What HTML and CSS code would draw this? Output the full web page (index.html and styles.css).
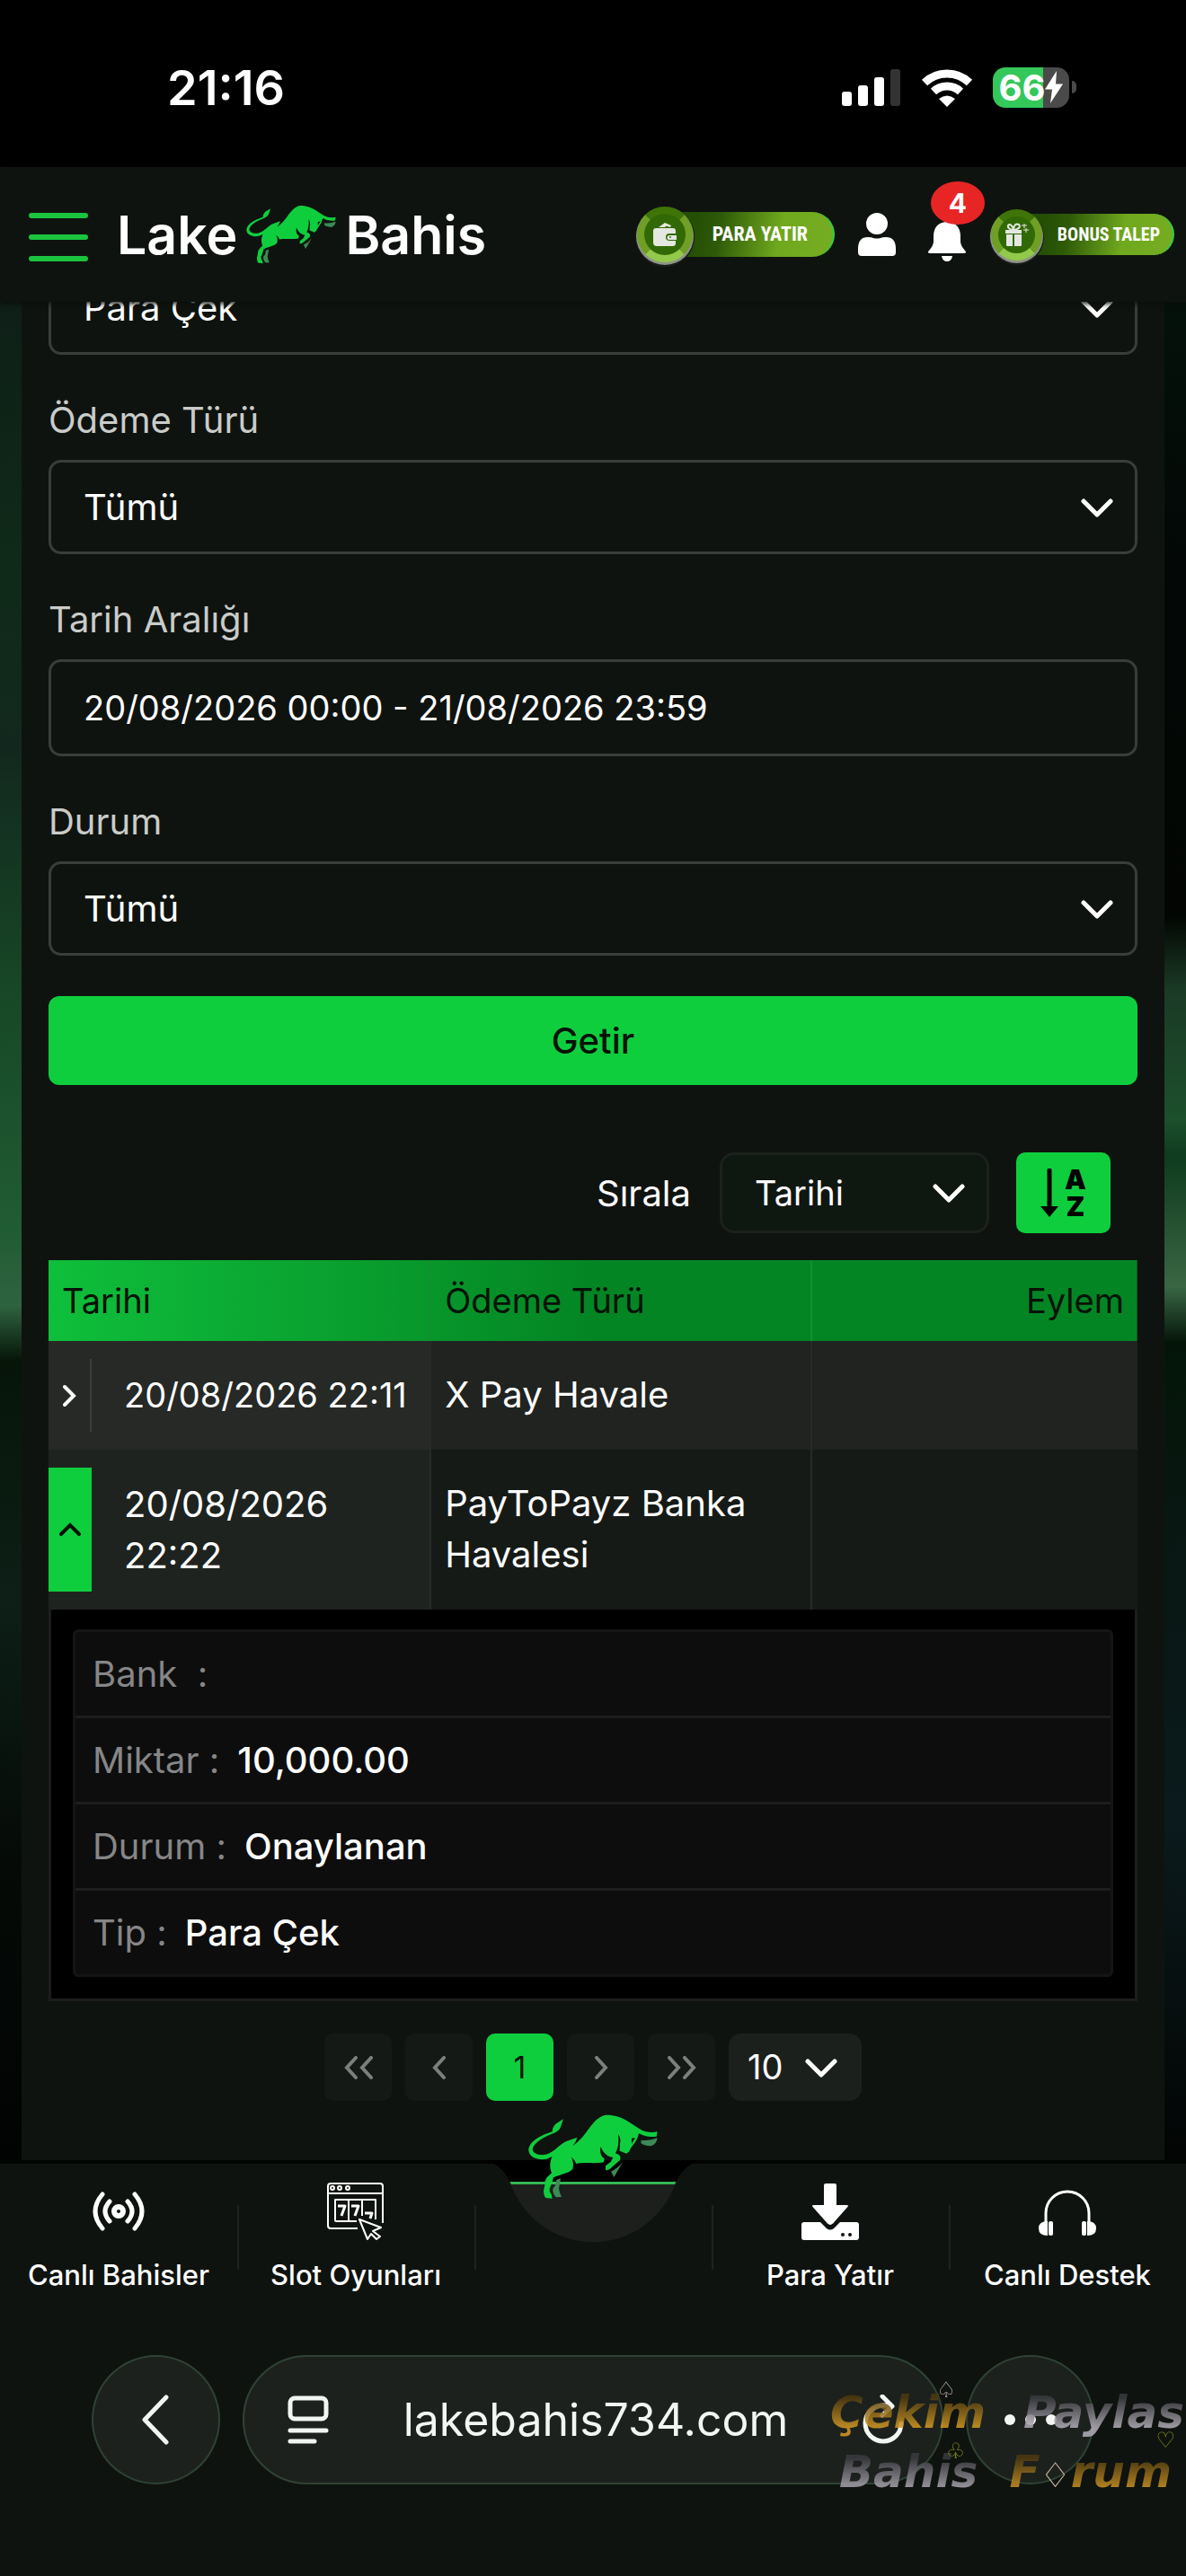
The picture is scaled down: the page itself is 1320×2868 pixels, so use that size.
FILE: index.html
```html
<!DOCTYPE html>
<html lang="tr">
<head>
  <meta charset="UTF-8" />
  <meta name="viewport" content="width=device-width, initial-scale=1" />
  <title>Lake Bahis</title>
  <link rel="stylesheet" href="styles.css">
</head>
<body>
  <svg class="sprite" aria-hidden="true">
    <symbol id="bull" viewBox="48 42 438 286">
      <g fill="#3c8a55">
        <path d="M158 257Q159 266 156 275L153 292Q156 308 162 320L144 321Q131 308 133 292Q146 280 144 264Z" />
        <path d="M366 204L337 254L327 235Q348 226 366 204Z" />
        <path d="M428 130Q455 133 482 123Q480 144 460 150Q436 149 427 140Z" />
      </g>
      <path fill="#0fce3e" d="M168 60L142 76Q130 90 131 102C92 114 52 136 52 164C54 190 86 198 112 193L131 185C121 205 123 224 129 240C115 252 105 262 107 276L102 300Q103 318 109 323L131 325L128 312Q120 302 122 292C128 280 132 266 135 255C160 243 190 240 199 226C203 212 201 198 194 187Q207 196 210 209C240 203 275 210 303 204L305 192C290 182 290 164 293 151C299 170 314 186 334 188L326 203L309 216L309 231Q322 230 330 220L357 197Q362 184 352 178L342 174Q356 148 351 110Q362 128 357 142L356 166L379 175L388 168Q392 157 398 150Q416 130 420 107Q446 123 479 118L482 102Q450 108 425 94L388 70C360 50 330 45 310 46C284 50 266 74 250 96C236 116 224 132 200 149Q212 134 214 121L178 134C152 146 130 180 98 180C68 179 60 165 69 150C82 130 112 116 138 106Q155 98 159 86Z" />
      <path class="bull-eye" d="M396 124L408 122L396 142Z" />
    </symbol>
    <symbol id="chevron" viewBox="0 0 36 22">
      <path d="M3 3l15 15L33 3" fill="none" stroke="currentColor" stroke-width="5" stroke-linecap="round" stroke-linejoin="round" />
    </symbol>
  </svg>

  <div class="status-bar">
    <span class="clock">21:16</span>
    <div class="status-icons">
      <svg width="66" height="42" viewBox="0 0 66 42" fill="#fff">
        <rect x="0" y="26" width="11" height="16" rx="3" />
        <rect x="18" y="19" width="11" height="23" rx="3" />
        <rect x="36" y="10" width="11" height="32" rx="3" />
        <rect x="54" y="1" width="11" height="41" rx="3" fill="#333" />
      </svg>
      <svg width="58" height="43" viewBox="0 0 58 43" fill="none" stroke="#fff" stroke-width="9">
        <path d="M4 16a36 36 0 0 1 50 0" />
        <path d="M14 26a22 22 0 0 1 30 0" />
        <path d="M29 43l-9-9q9-7 18 0z" fill="#fff" stroke="none" />
      </svg>
      <div class="battery">
        <span>66</span>
        <svg width="20" height="36" viewBox="0 0 20 30" preserveAspectRatio="none"><path d="M13 0L0 17h8L6 30 20 12h-8z" fill="#fff" /></svg>
      </div>
    </div>
  </div>

  <header class="header">
    <button class="menu" aria-label="Menü"><i></i><i></i><i></i></button>
    <a class="logo" href="#">Lake<svg width="102" height="66"><use href="#bull" /></svg>Bahis</a>

    <div class="header-actions">
      <button class="pill">
        <span class="coin">
          <svg width="26" height="28" viewBox="0 0 26 28" fill="#e4e8e0">
            <path d="M6 6l7-5 2 3-2 2zM13 1l7 3-1 2-6-2z" />
            <path d="M3 7h19q3 0 3 3v3h-7a4 4 0 0 0 0 8h7v3q0 3-3 3H4q-4 0-4-4V10q0-3 3-3z" />
            <path d="M18 15h8v5h-8a2 2 0 0 1 0-5z" /><circle cx="19" cy="17" r="1" fill="#357305" />
          </svg>
        </span>
        <span class="pill-text">PARA YATIR</span>
      </button>
      <button class="icon-btn" aria-label="Hesabım">
        <svg width="42" height="48" viewBox="0 0 42 48" fill="#fff">
          <circle cx="21" cy="12" r="12" />
          <path d="M0 40q0-13 11-13 4 0 6 1 4 1 8 0 2-1 6-1 11 0 11 13v4q0 4-4 4H4q-4 0-4-4z" />
        </svg>
      </button>
      <button class="icon-btn bell" aria-label="Bildirimler">
        <svg width="42" height="44" viewBox="0 0 42 44" fill="#fff">
          <path d="M21 0C11 0 6 7 6 16v6q0 4-5 10-3 3 2 3h36q5 0 2-3-5-6-5-10v-6C36 7 31 0 21 0zM15 38h12q-1 6-6 6t-6-6z" />
        </svg>
        <span class="badge">4</span>
      </button>
      <button class="pill pill-bonus">
        <span class="coin">
          <svg width="26" height="26" viewBox="0 0 26 26" fill="#e4e8e0">
            <path d="M0 8h18v4H0zM1 13h7v13H2q-1 0-1-1zM10 13h8v12q0 1-1 1h-7z" />
            <path d="M9 8Q2 7 3 3q3-3 6 4 1-7 6-5 3 4-5 6" fill="none" stroke="#e4e8e0" stroke-width="2" />
            <path d="M21 1v5M18 3h6M23 6v5M20 8h6" stroke="#e4e8e0" />
          </svg>
        </span>
        <span class="pill-text">BONUS TALEP</span>
      </button>
    </div>
  </header>

  <main class="content">
    <div class="panel">
      <form class="filters" onsubmit="return false">
        <div class="select-box">
          <select id="tip" aria-label="Tip"><option>Para Çek</option></select>
          <svg class="chevron"><use href="#chevron" /></svg>
        </div>

        <label for="odeme">Ödeme Türü</label>
        <div class="select-box">
          <select id="odeme"><option>Tümü</option></select>
          <svg class="chevron"><use href="#chevron" /></svg>
        </div>

        <label for="tarih">Tarih Aralığı</label>
        <input type="text" id="tarih" value="20/08/2026 00:00 - 21/08/2026 23:59" />

        <label for="durum">Durum</label>
        <div class="select-box">
          <select id="durum"><option>Tümü</option></select>
          <svg class="chevron"><use href="#chevron" /></svg>
        </div>

        <button type="submit" class="btn-getir">Getir</button>
      </form>

      <div class="sort-row">
        <label for="sirala">Sırala</label>
        <div class="select-box">
          <select id="sirala"><option>Tarihi</option></select>
          <svg class="chevron"><use href="#chevron" /></svg>
        </div>
        <button class="btn-sort" aria-label="Sırayı değiştir">
          <svg width="20" height="54" viewBox="0 0 20 54"><path d="M10 2v42" stroke="#000" stroke-width="5" stroke-linecap="round" /><path d="M0 42h20L10 54z" /></svg>
          <span>A<br>Z</span>
        </button>
      </div>

      <table class="history">
        <thead>
          <tr><th>Tarihi</th><th>Ödeme Türü</th><th>Eylem</th></tr>
        </thead>
        <tbody>
          <tr>
            <td>
              <div class="date-cell">
                <button class="expand" aria-label="Aç"><svg width="16" height="26" viewBox="0 0 16 26"><path d="M3 3l10 10L3 23" /></svg></button>
                <span>20/08/2026 22:11</span>
              </div>
            </td>
            <td>X Pay Havale</td>
            <td></td>
          </tr>
          <tr class="open">
            <td>
              <div class="date-cell">
                <button class="expand" aria-label="Kapat"><svg width="26" height="16" viewBox="0 0 26 16"><path d="M3 13L13 3l10 10" /></svg></button>
                <span>20/08/2026<br>22:22</span>
              </div>
            </td>
            <td>PayToPayz Banka Havalesi</td>
            <td></td>
          </tr>
          <tr class="details">
            <td colspan="3">
              <dl>
                <div><dt>Bank&nbsp; :</dt><dd></dd></div>
                <div><dt>Miktar :</dt><dd>10,000.00</dd></div>
                <div><dt>Durum :</dt><dd>Onaylanan</dd></div>
                <div><dt>Tip :</dt><dd>Para Çek</dd></div>
              </dl>
            </td>
          </tr>
        </tbody>
      </table>

      <div class="pagination">
        <button disabled aria-label="İlk"><svg width="32" height="26" viewBox="0 0 32 26"><path d="M13 2L3 13l10 11M30 2L20 13l10 11" /></svg></button>
        <button disabled aria-label="Önceki"><svg width="16" height="26" viewBox="0 0 16 26"><path d="M13 2L3 13l10 11" /></svg></button>
        <button class="active">1</button>
        <button disabled aria-label="Sonraki"><svg width="16" height="26" viewBox="0 0 16 26"><path d="M3 2l10 11L3 24" /></svg></button>
        <button disabled aria-label="Son"><svg width="32" height="26" viewBox="0 0 32 26"><path d="M2 2l10 11L2 24M19 2l10 11-10 11" /></svg></button>
        <div class="select-box">
          <select aria-label="Sayfa boyutu"><option>10</option></select>
          <svg class="chevron"><use href="#chevron" /></svg>
        </div>
      </div>
    </div>
  </main>

  <nav class="bottom-nav">
    <a href="#">
      <svg width="58" height="64" viewBox="0 0 58 64" fill="none" stroke="#fff" stroke-width="5" stroke-linecap="round">
        <circle cx="29" cy="32" r="5" stroke-width="6" />
        <path d="M19 21q-10 11 0 22M39 21q10 11 0 22M11 13q-16 19 0 38M47 13q16 19 0 38" />
      </svg>
      Canlı Bahisler
    </a>
    <a href="#">
      <svg width="64" height="64" viewBox="0 0 64 64" fill="none" stroke="#fff" stroke-width="2" stroke-linejoin="round">
        <path d="M62 45V4q0-3-3-3H4Q1 1 1 4v44q0 3 3 3h30M1 12h61" />
        <circle cx="6" cy="6" r="2" /><circle cx="14" cy="6" r="2" /><circle cx="23" cy="6" r="2" />
        <path d="M33 43H10q-1 0-1-1V19h45v22M24 19v24M39 19v18" />
        <path d="M12 26h8l-4 11M27 26h8l-4 11M42 34h8l-2 6" stroke-width="3" />
        <path d="M36 41l24 9-9 4 8 6-4 3-6-6-4 6z" />
      </svg>
      Slot Oyunları
    </a>
    <a class="home" href="#" aria-label="Ana Sayfa">
      <svg class="notch" width="240" height="96" viewBox="0 0 240 96">
        <clipPath id="notch-shape"><path d="M0 0Q20 6 28 25A97 97 0 0 0 212 25Q220 6 240 0z" /></clipPath>
        <g clip-path="url(#notch-shape)">
          <rect width="240" height="28" fill="#000" />
          <rect y="27" width="240" height="69" fill="#1c1f1c" />
          <rect y="24" width="240" height="3" fill="#34b755" />
        </g>
      </svg>
      <svg class="nav-bull"><use href="#bull" /></svg>
    </a>
    <a href="#">
      <svg width="64" height="64" viewBox="0 0 64 64" fill="#fff">
        <path d="M3 44h18l7 7q4 3 8 0l7-7h18q3 0 3 3v14q0 3-3 3H3q-3 0-3-3V47q0-3 3-3z" />
        <path d="M27 0h10q3 0 3 3v21h10q5 0 2 4L36 46q-4 4-8 0L12 28q-3-4 2-4h10V3q0-3 3-3z" stroke="#0f130f" stroke-width="2" />
        <circle cx="46" cy="58" r="2" fill="#0f130f" /><circle cx="54" cy="58" r="2" fill="#0f130f" />
      </svg>
      Para Yatır
    </a>
    <a href="#">
      <svg width="64" height="64" viewBox="0 0 64 64" fill="#fff">
        <path d="M8 44V34a24 24 0 0 1 48 0v10" fill="none" stroke="#fff" stroke-width="3" />
        <path d="M10 43v16Q0 59 0 51t10-8zM54 43v16q10 0 10-8t-10-8z" />
        <rect x="11" y="43" width="5" height="16" rx="2" /><rect x="48" y="43" width="5" height="16" rx="2" />
      </svg>
      Canlı Destek
    </a>
  </nav>

  <div class="browser-bar">
    <button class="round" aria-label="Geri">
      <svg width="32" height="56" viewBox="0 0 32 56" fill="none" stroke="#f2f5f2" stroke-width="5" stroke-linecap="round" stroke-linejoin="round"><path d="M27 3L3 28l24 25" /></svg>
    </button>
    <div class="address">
      <svg width="46" height="54" viewBox="0 0 46 54" fill="none" stroke="#f2f5f2" stroke-width="5" stroke-linecap="round"><rect x="3" y="3" width="40" height="23" rx="5" /><path d="M3 39h40M3 51h27" /></svg>
      <span>lakebahis734.com</span>
      <svg width="46" height="56" viewBox="0 0 46 56" fill="none" stroke="#f2f5f2" stroke-width="5" stroke-linecap="round" stroke-linejoin="round"><path d="M43 32a20 20 0 1 1-20-20h9M22 2l11 11-11 10" /></svg>
    </div>
    <button class="round" aria-label="Diğer">
      <svg width="58" height="12" viewBox="0 0 58 12" fill="#f2f5f2"><circle cx="6" cy="6" r="6" /><circle cx="29" cy="6" r="6" /><circle cx="52" cy="6" r="6" /></svg>
    </button>

    <div class="watermark">
      <p><span class="gold">Çekim</span><span class="silver">Paylas</span></p>
      <p><span class="silver">Bahis</span> <span class="gold">F<em>♢</em>rum</span></p>
      <i class="suit spade">♤</i>
      <i class="suit club">♧</i>
      <i class="suit heart">♡</i>
    </div>
  </div>
</body>
</html>
```
FILE: styles.css
```css
* {
  box-sizing: border-box;
}

body {
  margin: 0;
  min-height: 100vh;
  background: #0f130f;
  color: #fff;
  font-family: Inter, "Noto Sans", sans-serif;
  font-size: 38px;
  line-height: 57px;
}

button, input, select {
  font: inherit;
  color: inherit;
}

button {
  border: none;
  padding: 0;
  background: none;
  cursor: pointer;
  display: flex;
  align-items: center;
  justify-content: center;
}

a {
  color: inherit;
  text-decoration: none;
}

.sprite {
  position: absolute;
  width: 0;
  height: 0;
}

.bull-eye {
  fill: #0f130f;
}

/* status bar */
.status-bar {
  display: flex;
  justify-content: space-between;
  align-items: center;
  height: 186px;
  padding: 8px 130px 0 186px;
  background: #000;
}

.clock {
  font-size: 54px;
  font-weight: 600;
}

.status-icons {
  display: flex;
  align-items: center;
  gap: 22px;
}

.battery {
  position: relative;
  display: flex;
  align-items: center;
  justify-content: center;
  width: 85px;
  height: 45px;
  border-radius: 14px;
  background: linear-gradient(90deg, #34c759 66%, #4a4a4a 66%);
  font-size: 40px;
  font-weight: 700;
}

.battery::after {
  content: "";
  position: absolute;
  right: -8px;
  width: 5px;
  height: 14px;
  border-radius: 0 6px 6px 0;
  background: #4a4a4a;
}

/* header */
.header {
  position: relative;
  z-index: 2;
  display: flex;
  align-items: center;
  height: 150px;
  padding: 0 13px 0 32px;
  background: #0f130f;
  box-shadow: 0 2px 6px #0b0e0b;
}

.menu {
  flex-direction: column;
  gap: 18px;
  margin: 6px 32px 0 0;
}

.menu i {
  width: 66px;
  height: 6px;
  border-radius: 3px;
  background: #1bc43f;
}

.logo {
  display: flex;
  align-items: center;
  gap: 9px;
  font-size: 59px;
  font-weight: 600;
}

.header-actions {
  display: flex;
  align-items: center;
  margin-left: auto;
}

.pill {
  position: relative;
  height: 50px;
  width: 220px;
  padding: 0 28px 0 70px;
  justify-content: flex-end;
  border-radius: 25px;
  border-right: 2px solid #2fd04a;
  background: linear-gradient(100deg, #254f05 30%, #2e5a08 42%, #70a81e 72%, #76ad22);
}

.pill-text {
  font-family: "Liberation Sans Narrow", "Roboto Condensed", "Liberation Sans", sans-serif;
  font-size: 22px;
  font-weight: bold;
  line-height: 30px;
  white-space: nowrap;
}

.coin {
  position: absolute;
  left: 0;
  width: 62px;
  height: 62px;
  display: flex;
  align-items: center;
  justify-content: center;
  border-radius: 50%;
  border: 8px solid #6f9f25;
  border-top-color: #3f7508;
  border-bottom-color: #93c94a;
  background: #316906;
  box-shadow: 0 2px 0 1px #8d9488, 0 3px 0 2px #1a1d1a;
}

.icon-btn {
  position: relative;
  margin-left: 26px;
}

.bell {
  margin: 16px 28px 0 36px;
}

.badge {
  position: absolute;
  left: 3px;
  top: -45px;
  width: 60px;
  height: 48px;
  border-radius: 50%;
  background: #e82525;
  font-size: 30px;
  font-weight: 700;
  line-height: 48px;
}

.pill-bonus {
  width: 204px;
  height: 46px;
  padding: 0 14px 0 60px;
}

.pill-bonus .pill-text {
  font-size: 20px;
}

.pill-bonus .coin {
  width: 57px;
  height: 57px;
}

/* content, with the page artwork showing at both sides */
.content {
  overflow: hidden;
  padding: 0 24px;
  background:
    linear-gradient(#0e1f17, #0f2a18 14%, #12281e 24%, #174726 37%, #205c34 50%, #2f6340 54%, #061508 57%, #0d1f17 70%, #050a07 84%, #010302) left / 50% 100% no-repeat,
    linear-gradient(#04110a, #030806 14%, #020502 33%, #1b3a25 37%, #1c4f2c 44%, #0f3b1e 46%, #3a6644 53%, #041508 56%, #081712 66%, #0b1a1c 82%, #020403) right / 50% 100% no-repeat;
}

.panel {
  padding: 0 30px 66px;
  background: #0f130f;
}

.filters {
  display: flex;
  flex-direction: column;
  /* list is scrolled, first box sits partly under the header */
  margin-top: -46px;
}

.filters label {
  margin: 43px 0 14px;
  font-size: 40px;
  line-height: 60px;
  color: #c9ccc9;
}

.select-box {
  position: relative;
}

.select-box select {
  width: 100%;
  appearance: none;
}

.filters input,
.filters select {
  width: 100%;
  height: 105px;
  padding: 0 36px;
  border: 3px solid #3a3d3a;
  border-radius: 14px;
  background: #0f130f;
}

.filters select {
  font-size: 40px;
}

.filters input {
  height: 108px;
}

.chevron {
  position: absolute;
  right: 27px;
  top: 50%;
  width: 36px;
  height: 22px;
  margin-top: -10px;
  pointer-events: none;
}

.btn-getir {
  height: 99px;
  margin-top: 45px;
  border-radius: 12px;
  background: #0fce3e;
  color: #061206;
  font-size: 40px;
  font-weight: 500;
}

.sort-row {
  display: flex;
  align-items: center;
  justify-content: flex-end;
  margin: 75px 30px 30px 0;
}

.sort-row label {
  font-size: 40px;
}

.sort-row .select-box {
  width: 300px;
  margin: 0 30px 0 32px;
}

.sort-row select {
  height: 90px;
  padding: 0 36px;
  border: 3px solid #1c211d;
  border-radius: 16px;
  background: #0f1711;
}

.btn-sort {
  gap: 7px;
  width: 105px;
  height: 90px;
  border-radius: 10px;
  background: #0fce3e;
  color: #000;
  font-size: 30px;
  font-weight: 900;
  line-height: 30px;
}

/* history table */
.history {
  width: 100%;
  table-layout: fixed;
  border-collapse: separate;
  border-spacing: 0;
}

.history thead tr {
  background: linear-gradient(90deg, #0fbf3b, #048524 50%);
}

.history th {
  height: 90px;
  padding: 0 15px;
  border-left: 2px solid #138f31;
  color: #061206;
  font-weight: 400;
  text-align: left;
}

.history th:first-child {
  width: 35%;
  border-left: none;
}

.history th:nth-child(2) {
  width: 35%;
}

.history th:last-child {
  text-align: right;
}

.history td {
  padding: 31px 15px;
  border-left: 2px solid #272b28;
  background: #202320;
  font-size: 40px;
  vertical-align: top;
}

.history td:first-child {
  padding: 20px 0;
  border-left: none;
  background: #262926;
}

.history .open td {
  background: #161a16;
}

.history .open td:first-child {
  background: #1e231f;
}

.date-cell {
  display: flex;
}

.date-cell span {
  padding: 12px 0 12px 36px;
  font-size: 38px;
}

.open .date-cell span {
  font-size: 40px;
}

.expand {
  flex: none;
  width: 48px;
  border-right: 2px solid #3b3e3b;
}

.expand path {
  fill: none;
  stroke: #fff;
  stroke-width: 4;
  stroke-linecap: round;
}

.open .expand {
  border: none;
  background: #0fce3e;
}

.open .expand path {
  stroke: #061206;
}

.history .details td:first-child {
  padding: 22px 24px 24px;
  border: 3px solid #1d1d1d;
  border-top: none;
  background: #000;
}

dl {
  margin: 0;
  border: 3px solid #151515;
  border-radius: 6px;
  background: #0d0d0d;
}

dl div {
  display: flex;
  gap: 20px;
  height: 96px;
  align-items: center;
  padding-left: 19px;
  border-bottom: 3px solid #1d1d1d;
}

dl div:last-child {
  height: 93px;
  border-bottom: none;
}

dt {
  color: #868688;
}

dd {
  margin: 0;
  font-weight: 500;
}

/* pagination */
.pagination {
  display: flex;
  justify-content: center;
  gap: 15px;
  margin-top: 36px;
}

.pagination button {
  width: 75px;
  height: 75px;
  border-radius: 10px;
  background: #151915;
}

.pagination path {
  fill: none;
  stroke: #7c807c;
  stroke-width: 4;
  stroke-linecap: round;
}

.pagination .active {
  background: #0fce3e;
  color: #061206;
  font-size: 34px;
}

.pagination select {
  width: 148px;
  height: 75px;
  padding: 0 21px;
  border: none;
  border-radius: 14px;
  background: #1c201d;
}

/* bottom navigation */
.bottom-nav {
  position: relative;
  display: grid;
  grid-template-columns: repeat(5, 1fr);
  height: 188px;
  border-top: 4px solid #020402;
  background: #0f130f;
}

.bottom-nav a {
  position: relative;
  display: flex;
  flex-direction: column;
  align-items: center;
  padding-top: 21px;
  gap: 21px;
  font-size: 31px;
  font-weight: 500;
  line-height: 36px;
  white-space: nowrap;
}

.bottom-nav a + a::before {
  content: "";
  position: absolute;
  left: 0;
  top: 46px;
  width: 2px;
  height: 72px;
  background: #1f231f;
}

.notch {
  position: absolute;
  top: -4px;
}

.nav-bull {
  position: absolute;
  top: -56px;
  width: 146px;
  height: 96px;
}

/* browser toolbar */
.browser-bar {
  position: relative;
  display: flex;
  padding: 29px 102px 96px;
  gap: 25px;
}

.round {
  flex: none;
  width: 143px;
  height: 144px;
  border: 2px solid #2f4335;
  border-radius: 50%;
  background: #1c211d;
}

.address {
  flex: 1;
  display: flex;
  align-items: center;
  justify-content: space-between;
  padding: 0 42px 0 48px;
  border: 2px solid #2f4335;
  border-radius: 72px;
  background: #1c211d;
  color: #f2f5f2;
  font-size: 50px;
}

.watermark {
  position: absolute;
  top: 60px;
  right: 2px;
  width: 394px;
  font-family: "DejaVu Sans", sans-serif;
  font-size: 50px;
  font-style: italic;
  font-weight: 700;
  line-height: 66px;
  opacity: 0.85;
  pointer-events: none;
}

.watermark p {
  display: flex;
  justify-content: space-between;
  margin: 0;
}

.watermark p + p {
  padding: 0 14px 0 10px;
}

.watermark span {
  background-clip: text;
  -webkit-background-clip: text;
  color: transparent;
}

.gold {
  background-image: linear-gradient(#4d3a10 25%, #d69b25 75%);
}

.silver {
  background-image: linear-gradient(#3a3a40 25%, #b5b0b9 75%);
}

.watermark em {
  color: #d8c8c8;
  font-size: 38px;
  font-style: normal;
  font-weight: 400;
}

.suit {
  position: absolute;
  font-size: 24px;
  font-style: normal;
  font-weight: 400;
  line-height: 24px;
}

.spade {
  left: 118px;
  top: -4px;
  color: #d8c8c8;
}

.club {
  left: 129px;
  top: 64px;
  color: #a5ad1c;
}

.heart {
  right: 10px;
  top: 52px;
  color: #a5ad1c;
}
```
